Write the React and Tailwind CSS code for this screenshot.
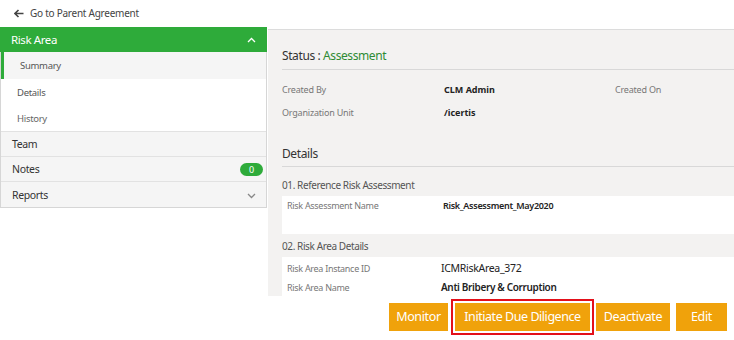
import React from "react";

const font = { fontFamily: '"Noto Sans", "Open Sans", Arial, sans-serif' };

function Chevron({ up, className }) {
  return (
    <svg width="9" height="6" viewBox="0 0 9 6" className={className}>
      <path
        d={up ? "M1 5 L4.5 1.5 L8 5" : "M1 1 L4.5 4.5 L8 1"}
        fill="none"
        stroke="currentColor"
        strokeWidth="1.3"
      />
    </svg>
  );
}

function Sidebar() {
  return (
    <div className="w-[267px] border-x border-b border-[#d6d6d6] bg-white flex flex-col">
      {/* Risk Area header */}
      <div className="h-[25px] bg-[#2eab3a] -mx-px px-[11px] flex items-center justify-between text-white text-[11.5px] tracking-[-0.4px]">
        <span>Risk Area</span>
        <Chevron up className="text-white" />
      </div>
      <div className="h-[27px] pt-[2px] bg-[#f5f5f5] border-l-[3px] border-[#2eab3a] flex items-center pl-[16px] text-[9.5px] tracking-[-0.3px] text-[#555]">
        Summary
      </div>
      <div className="h-[26px] pt-[2px] flex items-center pl-[16px] text-[9.5px] tracking-[-0.3px] text-[#555]">Details</div>
      <div className="h-[26px] pt-[2px] flex items-center pl-[16px] text-[9.5px] tracking-[-0.3px] text-[#666]">History</div>
      <div className="h-[25px] pt-[1px] bg-[#f5f5f5] border-t border-[#e2e2e2] flex items-center pl-[11px] text-[10.5px] tracking-[-0.35px] text-[#333]">
        Team
      </div>
      <div className="h-[25px] pt-[1px] bg-[#f5f5f5] border-t border-[#e2e2e2] flex items-center justify-between pl-[11px] pr-[3px] text-[10.5px] tracking-[-0.35px] text-[#333]">
        <span>Notes</span>
        <span className="w-[23px] h-[13px] rounded-full bg-[#2eab3a] text-white text-[9px] flex items-center justify-center">0</span>
      </div>
      <div className="h-[26px] pt-[2px] bg-[#f5f5f5] border-t border-[#e2e2e2] flex items-center justify-between pl-[11px] pr-[10px] text-[10.5px] tracking-[-0.35px] text-[#333]">
        <span>Reports</span>
        <Chevron className="text-[#888]" />
      </div>
    </div>
  );
}

function Row({ label, value, label2 }) {
  return (
    <div className="grid grid-cols-[162px_171px_1fr] h-[23px] items-center">
      <span className="text-[#777] text-[9px] tracking-[-0.2px]">{label}</span>
      <span className="font-bold text-[#222] text-[9px]">{value}</span>
      <span className="text-[#777] text-[9px] tracking-[-0.2px]">{label2}</span>
    </div>
  );
}

export default function App() {
  return (
    <div className="w-[734px] h-[340px] bg-white overflow-hidden" style={font}>
      {/* Back link */}
      <div className="h-[27px] flex items-center pl-[14px] gap-[6px] text-[10px] tracking-[-0.25px] text-[#444]">
        <svg width="10" height="9" viewBox="0 0 10 9">
          <path d="M9.5 4.5 H2 M4.5 1 L1 4.5 L4.5 8" fill="none" stroke="#444" strokeWidth="1.6" />
        </svg>
        <span>Go to Parent Agreement</span>
      </div>

      <div className="flex items-start">
        <Sidebar />

        <div className="flex-1 ml-[1px] mt-[2px] flex flex-col">
          {/* Main panel */}
          <div className="h-[267px] bg-[#f3f2f1] border-t border-[#dcdcdc] pl-[14px] overflow-hidden">
            <div className="h-[40px] flex items-end pb-[5px] border-b border-[#d8d8d8] text-[12px] leading-[16px] tracking-[-0.4px] text-[#333]">
              <span>
                Status : <span className="text-[#2e8b34]">Assessment</span>
              </span>
            </div>
            <div className="pt-[8px]">
              <Row label="Created By" value="CLM Admin" label2="Created On" />
              <Row label="Organization Unit" value="/icertis" />
            </div>

            <div className="h-[43px] flex items-end pb-[4px] border-b border-[#d8d8d8] text-[12px] leading-[16px] tracking-[-0.4px] text-[#333]">
              Details
            </div>

            <div className="h-[29px] flex items-end pb-[4px] text-[10px] leading-[14px] tracking-[-0.4px] text-[#555]">
              01. Reference Risk Assessment
            </div>
            <div className="h-[38px] bg-white pl-[5px] pt-[3px]">
              <div className="grid grid-cols-[156px_1fr] h-[14px] items-center">
                <span className="text-[#777] text-[9px] tracking-[-0.3px]">Risk Assessment Name</span>
                <span className="font-semibold text-[#222] text-[9px] tracking-[-0.3px]">Risk_Assessment_May2020</span>
              </div>
            </div>

            <div className="h-[23px] flex items-end pb-[4px] text-[10px] leading-[14px] tracking-[-0.4px] text-[#555]">
              02. Risk Area Details
            </div>
            <div className="bg-white pl-[5px] pt-[2px] h-[60px]">
              <div className="grid grid-cols-[154px_1fr] h-[19px] items-center">
                <span className="text-[#777] text-[9px] tracking-[-0.3px]">Risk Area Instance ID</span>
                <span className="text-[#222] text-[10.5px] tracking-[-0.3px]">ICMRiskArea_372</span>
              </div>
              <div className="grid grid-cols-[154px_1fr] h-[19px] items-center">
                <span className="text-[#777] text-[9px] tracking-[-0.3px]">Risk Area Name</span>
                <span className="text-[#222] text-[10px] tracking-[-0.35px] font-semibold">Anti Bribery &amp; Corruption</span>
              </div>
            </div>
          </div>

          {/* Action buttons */}
          <div className="flex items-center justify-end pr-[7px] mt-[3px] text-[12.5px] tracking-[-0.35px] text-white">
            <button className="h-[28px] w-[59px] bg-[#f0a20b]">Monitor</button>
            <div className="ml-[3px] border-2 border-[#e3101a] p-[2px]">
              <button className="h-[28px] w-[135px] bg-[#f0a20b] block tracking-[-0.45px]">Initiate Due Diligence</button>
            </div>
            <button className="ml-[2px] h-[28px] w-[74px] bg-[#f0a20b]">Deactivate</button>
            <button className="ml-[6px] h-[28px] w-[51px] bg-[#f0a20b]">Edit</button>
          </div>
        </div>
      </div>
    </div>
  );
}
